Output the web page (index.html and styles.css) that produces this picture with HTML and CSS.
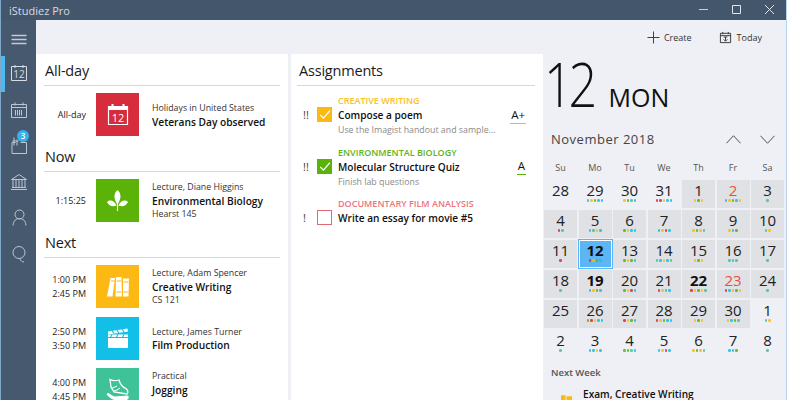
FILE: index.html
```html
<!DOCTYPE html>
<html lang="en">
<head>
<meta charset="utf-8">
<title>iStudiez Pro</title>
<link rel="stylesheet" href="styles.css">
</head>
<body>
<div class="window">
  <header class="titlebar">
    <span class="app-name">iStudiez Pro</span>
    <div class="win-controls">
      <svg class="win-btn" viewBox="0 0 33 20"><path d="M12 9.500h9" stroke="#c9d2dc" fill="none"/></svg>
      <svg class="win-btn" viewBox="0 0 33 20"><path d="M12.500 5.500h8v8h-8z" stroke="#dfe5ea" fill="none"/></svg>
      <svg class="win-btn" viewBox="0 0 33 20"><path d="M12 5l9 9M21 5l-9 9" stroke="#dfe5ea" fill="none"/></svg>
    </div>
  </header>
  <div class="body">
    <nav class="sidebar">
      <svg class="nav-menu" viewBox="0 0 35 36"><path d="M10.500 15.500h15M10.500 19.500h15M10.500 23.500h15" stroke="#c3ccd5" stroke-width="1.300" fill="none"/></svg>
      <div class="nav-item active">
        <svg class="nav-icon" viewBox="0 0 35 36"><path d="M10.500 10.500h15v14h-15zM14 9v3M22 9v3" stroke="#d5dce3" fill="none"/><text x="18" y="22" class="nav-12">12</text></svg>
      </div>
      <div class="nav-item">
        <svg class="nav-icon" viewBox="0 0 35 36"><path d="M10.500 12.500h15v13h-15zM10.500 15.500h15M14 10.500v3M22 10.500v3M14.500 18v5.500M16.500 18v5.500M18.500 18v5.500M20.500 18v5.500" stroke="#bcc6d0" fill="none"/></svg>
      </div>
      <div class="nav-item badge-host">
        <svg class="nav-icon" viewBox="0 0 35 36"><path d="M14.500 14.500h-3.500v11h14.500v-11h-6M13 9.500v8M16 11.500v6M11.500 13h6" stroke="#bcc6d0" fill="none"/></svg>
        <span class="badge">3</span>
      </div>
      <div class="nav-item">
        <svg class="nav-icon" viewBox="0 0 35 36"><path d="M10.500 15.500l7.500-5 7.500 5zM12 16v7M15 16v7M18 16v7M21 16v7M24 16v7M11 23.500h14M10 25.500h16" stroke="#bcc6d0" fill="none"/></svg>
      </div>
      <div class="nav-item">
        <svg class="nav-icon" viewBox="0 0 35 36"><circle cx="18.500" cy="14.500" r="4.500" stroke="#bcc6d0" fill="none"/><path d="M12 25.500c.5-5 3-7 6.500-7s6 2 6.500 7" stroke="#bcc6d0" fill="none"/></svg>
      </div>
      <div class="nav-item">
        <svg class="nav-icon" viewBox="0 0 35 36"><circle cx="18" cy="16.500" r="6" stroke="#bcc6d0" fill="none"/><path d="M19 23c1 2 2 3 4 3" stroke="#bcc6d0" fill="none"/></svg>
      </div>
    </nav>
    <main class="main">
      <div class="toolbar">
        <div class="tool tool-create">
          <svg class="tool-icon" viewBox="0 0 14 14"><path d="M7 .5v13M.5 7h13" stroke="#333" fill="none"/></svg>
          <span>Create</span>
        </div>
        <div class="tool">
          <svg class="tool-icon" viewBox="0 0 14 14"><path d="M1.500 2.500h11v10h-11zM1.500 5h11M4 1v2.500M10 1v2.500M7 6.500v4M5 9l2 2 2-2M5 6.500h4" stroke="#333" fill="none"/></svg>
          <span>Today</span>
        </div>
      </div>
      <div class="columns">
        <section class="col col-schedule">
          <h2 class="heading">All-day</h2>
          <div class="event">
            <div class="times"><span>All-day</span></div>
            <div class="tile tile-red">
              <svg viewBox="0 0 43 43"><path d="M12.500 13.500h19v18h-19z" stroke="#fff" fill="none" stroke-width="1.200"/><path d="M12 13h20v4h-20z" fill="#fff"/><path d="M16.500 11v4M27.500 11v4" stroke="#fff" stroke-width="2" fill="none"/><text x="22" y="29" class="tile-12">12</text></svg>
            </div>
            <div class="info"><span>Holidays in United States</span><strong>Veterans Day observed</strong></div>
          </div>
          <h2 class="heading">Now</h2>
          <div class="event">
            <div class="times"><span>1:15:25</span></div>
            <div class="tile tile-green">
              <svg viewBox="0 0 43 43"><path d="M21.500 11c3.500 3 4.500 8 0 14.500-4.500-6.500-3.500-11.500 0-14.500zM11 23c3-2.500 7-2 9.500 3.500-4 1.500-7.500 .5-9.500-3.500zM32 23c-3-2.500-7-2-9.500 3.500 4 1.500 7.500 .5 9.500-3.500z" fill="#fff"/><path d="M21.500 18v14" stroke="#fff" stroke-width="1.200" fill="none"/></svg>
            </div>
            <div class="info"><span>Lecture, Diane Higgins</span><strong>Environmental Biology</strong><span>Hearst 145</span></div>
          </div>
          <h2 class="heading">Next</h2>
          <div class="event">
            <div class="times"><span>1:00 PM</span><span>2:45 PM</span></div>
            <div class="tile tile-yellow">
              <svg viewBox="0 0 43 43"><path d="M14.500 13h4.500l-2.500 18.500h-5.500zM20 12h5.500l.5 19.500h-6.500zM27 13.500h6l-.5 18h-5.500z" fill="#fff"/><path d="M15 16h4M20.500 16h5M27.500 17h5M20.500 27h5M27.500 27h5" stroke="#fdb913" fill="none"/></svg>
            </div>
            <div class="info"><span>Lecture, Adam Spencer</span><strong>Creative Writing</strong><span>CS 121</span></div>
          </div>
          <div class="event">
            <div class="times"><span>2:50 PM</span><span>3:50 PM</span></div>
            <div class="tile tile-blue">
              <svg viewBox="0 0 43 43"><path d="M12 21h20v10h-20z" fill="#fff"/><path d="M12 14.500l19.500-3 .5 3-20 3z" fill="#fff"/><path d="M12 17.500h20v2.500h-20z" fill="#fff"/><path d="M16 13.500l2 3M21 13l2 3M26 12l2 3M16 17.500l-1.500 2.500M22 17.500l-1.500 2.500M28 17.500l-1.500 2.500" stroke="#12bfe6" stroke-width="1.200" fill="none"/></svg>
            </div>
            <div class="info"><span>Lecture, James Turner</span><strong>Film Production</strong></div>
          </div>
          <div class="event">
            <div class="times"><span>4:00 PM</span><span>4:45 PM</span></div>
            <div class="tile tile-mint">
              <svg viewBox="0 0 43 43"><path d="M14 11.500c3 1.500 6 1.500 9 .5 1 4 3 7 7.500 9 1.500 2 1.500 4 .5 5l-13-2-3-5z" fill="none" stroke="#fff" stroke-width="1.300"/><path d="M16 20c1 0 3-1 5-2M18 23c1 0 4-1 6-3M12 25c3 2.500 5 3.500 7 4l13-1c.5 2 0 3-1 3.500h-12c-3 0-6-3-8-5z" fill="#fff" stroke="#fff"/></svg>
            </div>
            <div class="info"><span>Practical</span><strong>Jogging</strong><span>&nbsp;</span></div>
          </div>
        </section>
        <section class="col col-assign">
          <h2 class="heading">Assignments</h2>
          <div class="task">
            <span class="prio">!!</span>
            <span class="check check-yellow"><svg viewBox="0 0 14 14"><path d="M3 7.500l3 3 6-7" stroke="#fff" stroke-width="1.100" fill="none"/></svg></span>
            <div class="task-text">
              <span class="cat c-yellow">CREATIVE WRITING</span>
              <strong>Compose a poem</strong>
              <span class="note">Use the Imagist handout and sample...</span>
            </div>
            <span class="grade g-yellow">A+</span>
          </div>
          <div class="task">
            <span class="prio">!!</span>
            <span class="check check-green"><svg viewBox="0 0 14 14"><path d="M3 7.500l3 3 6-7" stroke="#fff" stroke-width="1.100" fill="none"/></svg></span>
            <div class="task-text">
              <span class="cat c-green">ENVIRONMENTAL BIOLOGY</span>
              <strong>Molecular Structure Quiz</strong>
              <span class="note">Finish lab questions</span>
            </div>
            <span class="grade g-green">A</span>
          </div>
          <div class="task">
            <span class="prio">!</span>
            <span class="check check-red"></span>
            <div class="task-text">
              <span class="cat c-red">DOCUMENTARY FILM ANALYSIS</span>
              <strong>Write an essay for movie #5</strong>
            </div>
          </div>
        </section>
        <aside class="panel">
          <div class="today"><span class="today-num">12</span><span class="today-day">MON</span></div>
          <div class="month-row">
            <span class="month">November 2018</span>
            <div class="month-nav">
              <svg class="chev" viewBox="0 0 16 9"><path d="M.5 8.500l7.500-8 7.500 8" stroke="#444" fill="none"/></svg>
              <svg class="chev" viewBox="0 0 16 9"><path d="M.5.500l7.500 8 7.500-8" stroke="#444" fill="none"/></svg>
            </div>
          </div>
          <div class="weekdays"><span>Su</span><span>Mo</span><span>Tu</span><span>We</span><span>Th</span><span>Fr</span><span>Sa</span></div>
          <div class="month-grid">
            <div class="day"><b>28</b><i></i></div>
            <div class="day"><b>29</b><i><u class="b"></u><u class="y"></u><u class="g"></u><u class="b"></u><u class="b"></u></i></div>
            <div class="day"><b>30</b><i><u class="y"></u><u class="g"></u><u class="m"></u><u class="b"></u></i></div>
            <div class="day"><b>31</b><i><u class="r"></u><u class="r"></u><u class="y"></u><u class="b"></u><u class="b"></u></i></div>
            <div class="day on"><b>1</b><i><u class="y"></u><u class="g"></u><u class="y"></u></i></div>
            <div class="day on"><b class="red">2</b><i><u class="b"></u><u class="y"></u><u class="g"></u><u class="b"></u><u class="y"></u></i></div>
            <div class="day on"><b>3</b><i><u class="m"></u></i></div>

            <div class="day on"><b>4</b><i><u class="r"></u><u class="m"></u></i></div>
            <div class="day on"><b>5</b><i><u class="b"></u><u class="m"></u><u class="y"></u><u class="b"></u></i></div>
            <div class="day on"><b>6</b><i><u class="g"></u><u class="y"></u><u class="b"></u><u class="b"></u></i></div>
            <div class="day on"><b>7</b><i><u class="b"></u><u class="y"></u><u class="r"></u><u class="b"></u></i></div>
            <div class="day on"><b>8</b><i><u class="y"></u><u class="g"></u><u class="y"></u><u class="m"></u></i></div>
            <div class="day on"><b>9</b><i><u class="y"></u><u class="b"></u><u class="g"></u></i></div>
            <div class="day on"><b>10</b><i><u class="m"></u><u class="y"></u></i></div>

            <div class="day on"><b>11</b><i><u class="r"></u></i></div>
            <div class="day sel"><b class="bold">12</b><i><u class="r"></u><u class="y"></u><u class="g"></u><u class="b"></u></i></div>
            <div class="day on"><b>13</b><i><u class="g"></u><u class="y"></u><u class="g"></u><u class="b"></u></i></div>
            <div class="day on"><b>14</b><i><u class="m"></u><u class="b"></u><u class="y"></u><u class="b"></u><u class="m"></u></i></div>
            <div class="day on"><b>15</b><i><u class="y"></u><u class="g"></u><u class="y"></u></i></div>
            <div class="day on"><b>16</b><i><u class="m"></u><u class="b"></u><u class="m"></u></i></div>
            <div class="day on"><b>17</b><i><u class="m"></u></i></div>

            <div class="day on"><b>18</b><i><u class="m"></u></i></div>
            <div class="day on"><b class="bold">19</b><i><u class="b"></u><u class="y"></u><u class="g"></u><u class="b"></u></i></div>
            <div class="day on"><b>20</b><i><u class="g"></u><u class="y"></u><u class="r"></u><u class="b"></u></i></div>
            <div class="day on"><b>21</b><i><u class="r"></u><u class="y"></u><u class="b"></u><u class="b"></u></i></div>
            <div class="day on"><b class="bold">22</b><i><u class="r"></u><u class="y"></u><u class="g"></u><u class="y"></u><u class="m"></u></i></div>
            <div class="day on"><b class="red">23</b><i><u class="r"></u><u class="b"></u><u class="y"></u><u class="g"></u><u class="y"></u></i></div>
            <div class="day on"><b>24</b><i><u class="m"></u></i></div>

            <div class="day on"><b>25</b><i></i></div>
            <div class="day on"><b>26</b><i><u class="g"></u><u class="r"></u><u class="y"></u><u class="b"></u><u class="b"></u></i></div>
            <div class="day on"><b>27</b><i><u class="r"></u><u class="y"></u><u class="g"></u><u class="b"></u></i></div>
            <div class="day on"><b>28</b><i><u class="r"></u><u class="y"></u><u class="g"></u><u class="b"></u><u class="b"></u></i></div>
            <div class="day on"><b>29</b><i><u class="y"></u><u class="g"></u><u class="y"></u></i></div>
            <div class="day on"><b>30</b><i><u class="y"></u><u class="b"></u><u class="g"></u><u class="m"></u></i></div>
            <div class="day"><b>1</b><i><u class="m"></u><u class="y"></u></i></div>

            <div class="day"><b>2</b><i><u class="m"></u></i></div>
            <div class="day"><b>3</b><i><u class="b"></u><u class="b"></u><u class="y"></u><u class="b"></u></i></div>
            <div class="day"><b>4</b><i><u class="g"></u><u class="g"></u><u class="m"></u><u class="b"></u></i></div>
            <div class="day"><b>5</b><i><u class="b"></u><u class="y"></u><u class="r"></u><u class="b"></u></i></div>
            <div class="day"><b>6</b><i><u class="y"></u><u class="g"></u><u class="y"></u><u class="m"></u></i></div>
            <div class="day"><b>7</b><i><u class="b"></u><u class="b"></u><u class="g"></u></i></div>
            <div class="day"><b>8</b><i><u class="m"></u></i></div>
          </div>
          <div class="next-week">Next Week</div>
          <div class="next-item">
            <svg class="next-icon" viewBox="0 0 13 10"><path d="M0 2h5v8h-5zM6 3h6v7h-6z" fill="#fdb913"/></svg>
            <strong>Exam, Creative Writing</strong>
          </div>
        </aside>
      </div>
    </main>
  </div>
</div>
</body>
</html>
```

FILE: styles.css
```css
* { box-sizing: border-box; }
html, body { margin: 0; height: 100%; overflow: hidden; background: #fff; }
body { font-family: "Open Sans", "Noto Sans", sans-serif; color: #1a1a1a; }
.window { width: 787px; height: 400px; display: flex; flex-direction: column; overflow: hidden; border-left: 1px solid #7fa9c9; border-right: 1px solid #b4d3e8; }
.titlebar { height: 20px; flex: none; background: #44566c; display: flex; justify-content: space-between; align-items: center; padding-left: 8px; }
.app-name { font-size: 11px; color: #d5dce3; }
.win-controls { display: flex; }
.win-btn { width: 33px; height: 20px; display: block; }
.body { flex: 1; display: flex; min-height: 0; }
.sidebar { width: 35px; flex: none; background: #47596f; display: flex; flex-direction: column; }
.nav-menu { width: 35px; height: 36px; display: block; flex: none; }
.nav-item { height: 36px; flex: none; position: relative; }
.nav-icon { width: 35px; height: 36px; display: block; }
.nav-item.active::before { content: ""; position: absolute; left: 0; top: 0; width: 4px; height: 100%; background: #4cb9f5; }
.nav-12 { font-size: 10px; fill: #d5dce3; text-anchor: middle; font-family: "Open Sans", sans-serif; }
.badge { position: absolute; left: 16px; top: 2px; width: 12px; height: 12px; border-radius: 50%; background: #36b1ee; color: #fff; font-size: 8px; line-height: 12px; text-align: center; font-weight: 600; }
.main { flex: 1; min-width: 0; background: #eef0f5; display: flex; flex-direction: column; }
.toolbar { height: 34px; flex: none; display: flex; justify-content: flex-end; align-items: center; gap: 27px; padding-right: 24px; font-size: 9px; color: #333; }
.tool { display: flex; align-items: center; gap: 5px; }
.tool-create { gap: 4px; }
.tool-icon { width: 13px; height: 13px; display: block; }
.columns { flex: 1; display: flex; min-height: 0; }
.col { background: #fff; flex: none; overflow: hidden; }
.col-schedule { width: 252px; padding: 6px 8px; margin-right: 3px; }
.col-assign { width: 252px; padding: 6px 8px 6px 6px; }
.heading { margin: 10px 0 7px; height: 26px; padding: 0 0 3px 1px; line-height: 22px; border-bottom: 1px solid #d5d8dd; font-size: 14.500px; letter-spacing: -.2px; font-weight: 400; color: #1a1a1a; }
.heading:first-child { margin-top: 0; }
.col-assign .heading { margin-bottom: 1px; padding-left: 2px; }
.event { display: flex; align-items: center; height: 43px; margin-bottom: 8.500px; }
.times { width: 42px; flex: none; display: flex; flex-direction: column; gap: 3px; align-items: flex-end; font-size: 9px; line-height: 11px; font-weight: 500; color: #222; }
.tile { width: 43px; height: 43px; flex: none; margin-left: 10px; }
.tile svg { width: 43px; height: 43px; display: block; }
.tile-red { background: #d62c3c; }
.tile-green { background: #5bb208; }
.tile-yellow { background: #fdb913; }
.tile-blue { background: #12bfe6; }
.tile-mint { background: #3fc297; }
.tile-12 { font-size: 11px; fill: #fff; text-anchor: middle; font-family: "Open Sans", sans-serif; }
.info { margin-left: 13px; padding-top: 2px; display: flex; flex-direction: column; font-size: 8.800px; line-height: 13.500px; color: #333; white-space: nowrap; }
.info strong { font-size: 10.200px; font-weight: 600; color: #111; }
.task { display: flex; align-items: center; height: 51.500px; position: relative; }
.prio { width: 20px; padding-left: 6px; flex: none; font-size: 11px; color: #444; margin-top: 4px; }
.check { width: 15px; height: 15px; flex: none; display: block; margin-top: 4px; }
.check svg { width: 15px; height: 15px; display: block; }
.check-yellow { background: #fdb913; }
.check-green { background: #5bb208; }
.check-red { background: #fff; border: 1px solid #e06a74; }
.task-text { margin-left: 6px; display: flex; flex-direction: column; line-height: 15px; white-space: nowrap; align-self: flex-start; padding-top: 6px; }
.task-text strong { font-size: 10.100px; font-weight: 600; color: #111; }
.cat { font-size: 9px; font-weight: 600; }
.c-yellow { color: #fdbe2b; }
.c-green { color: #62b21a; }
.c-red { color: #ec737d; }
.note { font-size: 8.800px; color: #8a8a8a; }
.grade { margin-left: auto; margin-right: 9px; margin-top: 6px; font-size: 11.500px; font-weight: 500; line-height: 14px; padding: 0 1px 1px; border-bottom: 1px solid; color: #111; }
.g-yellow { border-color: #fdb913; }
.g-green { border-color: #5bb208; }
.panel { flex: 1; min-width: 0; }
.today { display: flex; align-items: baseline; height: 60px; padding-left: 1px; }
.today-num { font-size: 60px; font-weight: 300; line-height: 60px; letter-spacing: -5px; color: #111; transform: scaleX(.84); transform-origin: left center; }
.today-day { font-size: 25px; line-height: 30px; margin-left: 6px; color: #111; font-weight: 400; }
.month-row { display: flex; justify-content: space-between; align-items: center; height: 24px; margin-top: 13px; padding: 0 11px 0 8px; }
.month { font-size: 13px; letter-spacing: .5px; color: #444; }
.month-nav { display: flex; gap: 19px; }
.chev { width: 15px; height: 9px; display: block; }
.weekdays { display: grid; grid-template-columns: repeat(7, 33px); column-gap: 1.500px; padding-left: 1px; margin-top: 10px; font-size: 9px; line-height: 14px; color: #555; text-align: center; }
.month-grid { display: grid; grid-template-columns: repeat(7, 33px); grid-auto-rows: 28px; gap: 2px 1.500px; padding-left: 1px; margin-top: 5px; }
.day { display: flex; flex-direction: column; align-items: center; }
.day.on { background: #dfe1e5; }
.day.sel { background: #5ab6f4; box-shadow: 0 0 0 1px #5ab6f4, inset 0 0 0 1px #fff; }
.day b { font-size: 15px; font-weight: 400; line-height: 21px; height: 19px; color: #222; }
.day b.bold { font-weight: 700; color: #111; }
.day b.red { color: #e8503a; }
.day i { display: flex; gap: 1px; height: 3px; margin-top: 0; }
.day u { width: 2.500px; height: 2.500px; border-radius: 50%; display: block; opacity: .85; }
u.r { background: #d62c3c; }
u.y { background: #fdb913; }
u.g { background: #5bb208; }
u.b { background: #12bfe6; }
u.m { background: #3fc297; }
.next-week { margin: 8px 0 0 8px; font-size: 9.500px; font-weight: 600; line-height: 14px; color: #555; }
.next-item { display: flex; align-items: center; margin: 5px 0 0 18px; font-size: 10.100px; line-height: 16px; white-space: nowrap; }
.next-item strong { font-weight: 600; color: #111; margin-left: 10px; }
.next-icon { width: 12px; height: 10px; display: block; margin-top: 8px; }
```
